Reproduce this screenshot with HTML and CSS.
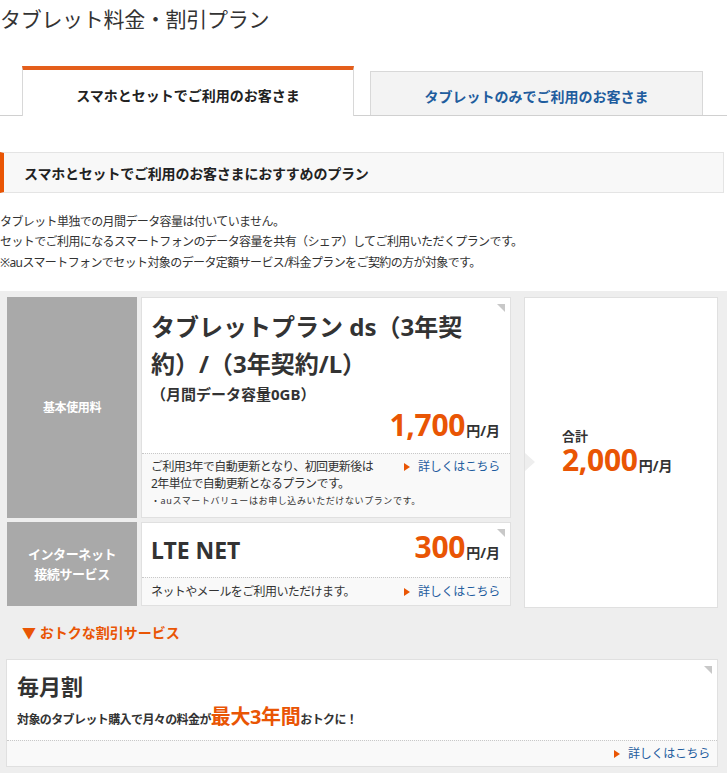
FILE: index.html
```html
<!DOCTYPE html>
<html lang="ja">
<head>
    <meta charset="UTF-8">
    <meta name="viewport" content="width=device-width, initial-scale=1.0">
    <title>タブレット料金・割引プラン</title>
    <link rel="stylesheet" href="styles.css">
</head>
<body>
    <h1 class="page-title">タブレット料金・割引プラン</h1>

    <div class="tabs">
        <div class="tab tab-active">スマホとセットでご利用のお客さま</div>
        <div class="tab">タブレットのみでご利用のお客さま</div>
    </div>

    <h2 class="section-head">スマホとセットでご利用のお客さまにおすすめのプラン</h2>

    <p class="lead">タブレット単独での月間データ容量は付いていません。<br>セットでご利用になるスマートフォンのデータ容量を共有（シェア）してご利用いただくプランです。</p>
    <p class="lead note-lead">※auスマートフォンでセット対象のデータ定額サービス/料金プランをご契約の方が対象です。</p>

    <div class="plan-area">
        <div class="plan-table">
            <div class="plans">
                <div class="plan-row row-basic">
                    <div class="plan-label">基本使用料</div>
                    <div class="plan-card">
                        <span class="corner"></span>
                        <div class="plan-body">
                            <div class="plan-name">タブレットプラン ds（3年契約）/（3年契約/L）</div>
                            <div class="plan-sub">（月間データ容量0GB）</div>
                            <div class="price"><span class="num">1,700</span><span class="unit">円/月</span></div>
                        </div>
                        <div class="plan-foot">
                            <div class="foot-row">
                                <div class="foot-desc">ご利用3年で自動更新となり、初回更新後は<br>2年単位で自動更新となるプランです。</div>
                                <a class="more" href="#">詳しくはこちら</a>
                            </div>
                            <div class="foot-note">・auスマートバリューはお申し込みいただけないプランです。</div>
                        </div>
                    </div>
                </div>
                <div class="plan-row row-net">
                    <div class="plan-label">インターネット<br>接続サービス</div>
                    <div class="plan-card">
                        <span class="corner"></span>
                        <div class="plan-body body-inline">
                            <div class="plan-name name-net">LTE NET</div>
                            <div class="price"><span class="num">300</span><span class="unit">円/月</span></div>
                        </div>
                        <div class="plan-foot">
                            <div class="foot-row">
                                <div class="foot-desc">ネットやメールをご利用いただけます。</div>
                                <a class="more" href="#">詳しくはこちら</a>
                            </div>
                        </div>
                    </div>
                </div>
            </div>
            <div class="total-card">
                <span class="total-arrow"></span>
                <div class="total-label">合計</div>
                <div class="price total-price"><span class="num">2,000</span><span class="unit">円/月</span></div>
            </div>
        </div>

        <div class="discount-head">▼ おトクな割引サービス</div>

        <div class="discount-card">
            <span class="corner"></span>
            <div class="discount-body">
                <div class="discount-name">毎月割</div>
                <div class="discount-text">対象のタブレット購入で月々の料金が<span class="strong">最大3年間</span>おトクに！</div>
            </div>
            <div class="discount-foot">
                <a class="more" href="#">詳しくはこちら</a>
            </div>
        </div>
    </div>
</body>
</html>
```

FILE: styles.css
```css
* {
    margin: 0;
    padding: 0;
    box-sizing: border-box;
}

body {
    font-family: "Noto Sans", "Noto Sans CJK JP", sans-serif;
    color: #333;
    background: #fff;
    width: 727px;
}

a {
    text-decoration: none;
}

.page-title {
    font-size: 21px;
    font-weight: normal;
    line-height: 38px;
    color: #333;
    letter-spacing: -0.3px;
}

.tabs {
    display: flex;
    align-items: flex-end;
    gap: 16px;
    padding-left: 22px;
    margin-top: 28px;
    border-bottom: 1px solid #d0d0d0;
}

.tab {
    width: 333px;
    height: 44px;
    display: flex;
    align-items: center;
    justify-content: center;
    font-size: 14px;
    font-weight: bold;
    color: #1f5d9e;
    background: #f3f3f3;
    border: 1px solid #d8d8d8;
    border-bottom: none;
    padding-top: 5px;
}

.tab-active {
    width: 332px;
    height: 50px;
    color: #222;
    background: #fff;
    border-top: 4px solid #e45e1b;
    margin-bottom: -1px;
    padding-top: 3px;
}

.section-head {
    margin-top: 36px;
    width: 724px;
    height: 41px;
    display: flex;
    align-items: center;
    padding-left: 20px;
    font-size: 14px;
    font-weight: bold;
    color: #222;
    letter-spacing: -0.2px;
    background: #f8f8f8;
    border: 1px solid #e4e4e4;
    border-left: 4px solid #e95504;
}

.lead {
    font-size: 12px;
    line-height: 20px;
    letter-spacing: -0.6px;
    color: #333;
}

.lead:first-of-type {
    margin-top: 19px;
}

.note-lead {
    margin-top: 1px;
}

.plan-area {
    margin-top: 18px;
    background: #eee;
    padding: 6px 9px 6px 6px;
}

.plan-table {
    display: flex;
    align-items: stretch;
}

.plans {
    display: flex;
    flex-direction: column;
    gap: 4px;
    padding-left: 1px;
}

.plan-row {
    display: flex;
    gap: 4px;
}

.plan-label {
    width: 130px;
    background: #a9a9a9;
    color: #fff;
    font-size: 13px;
    font-weight: bold;
    line-height: 20px;
    letter-spacing: -0.4px;
    display: flex;
    align-items: center;
    justify-content: center;
    text-align: center;
}

.row-basic .plan-label {
    font-size: 12px;
}

.plan-card {
    position: relative;
    width: 370px;
    background: #fff;
    border: 1px solid #e0e0e0;
    display: flex;
    flex-direction: column;
}

.row-basic .plan-card {
    height: 221px;
}

.row-net .plan-card {
    height: 84px;
}

.corner {
    position: absolute;
    top: 6px;
    right: 5px;
    width: 0;
    height: 0;
    border-top: 8px solid #c8c8c8;
    border-left: 8px solid transparent;
}

.plan-body {
    flex: 1;
    padding: 10px 10px 0 9px;
}

.plan-name {
    font-size: 24px;
    font-weight: bold;
    line-height: 37px;
    color: #333;
    max-width: 318px;
}

.plan-sub {
    font-size: 15px;
    font-weight: bold;
    line-height: 24px;
    color: #333;
}

.price {
    display: flex;
    justify-content: flex-end;
    align-items: baseline;
    color: #333;
    line-height: 30px;
}

.row-basic .price {
    margin-top: 4px;
}

.num {
    display: inline-block;
    font-size: 30px;
    font-weight: bold;
    line-height: 30px;
    color: #e95504;
    letter-spacing: -0.3px;
}

.unit {
    font-size: 14px;
    font-weight: bold;
    margin-left: 1px;
}

.body-inline {
    display: flex;
    justify-content: space-between;
    align-items: center;
    padding-top: 0;
}

.name-net {
    font-size: 23px;
    line-height: 34px;
    max-width: none;
}

.plan-foot {
    background: #f9f9f9;
    border-top: 1px dotted #c8c8c8;
    padding: 4px 10px 7px 9px;
}

.row-net .plan-foot {
    padding-top: 5px;
    padding-bottom: 5px;
}

.foot-row {
    display: flex;
    justify-content: space-between;
    align-items: flex-start;
}

.foot-desc {
    font-size: 12px;
    line-height: 17px;
    letter-spacing: -0.6px;
    color: #333;
}

.more {
    font-size: 12px;
    line-height: 17px;
    letter-spacing: -0.3px;
    color: #1f5d9e;
    white-space: nowrap;
}

.more::before {
    content: "";
    display: inline-block;
    width: 0;
    height: 0;
    border-left: 6px solid #e95504;
    border-top: 4px solid transparent;
    border-bottom: 4px solid transparent;
    margin-right: 8px;
    vertical-align: 0;
}

.foot-note {
    font-size: 9px;
    line-height: 18px;
    letter-spacing: 0.6px;
    color: #333;
}

.total-card {
    position: relative;
    flex: 1;
    margin-left: 13px;
    margin-bottom: -2px;
    background: #fff;
    border: 1px solid #e0e0e0;
    display: flex;
    flex-direction: column;
    justify-content: center;
    padding-left: 37px;
    padding-top: 4px;
}

.total-arrow {
    position: absolute;
    left: 0;
    top: 155px;
    width: 0;
    height: 0;
    border-left: 10px solid #eee;
    border-top: 9px solid transparent;
    border-bottom: 9px solid transparent;
}

.total-label {
    font-size: 13px;
    font-weight: bold;
    line-height: 16px;
    color: #333;
    margin-bottom: 1px;
}

.total-price {
    justify-content: flex-start;
}

.discount-head {
    padding: 17px 0 0 16px;
    height: 53px;
    font-size: 14px;
    font-weight: bold;
    line-height: 20px;
    color: #e95504;
}

.discount-card {
    position: relative;
    background: #fff;
    border: 1px solid #e0e0e0;
}

.discount-body {
    padding: 11px 10px 4px 10px;
}

.discount-name {
    font-size: 22px;
    font-weight: bold;
    line-height: 30px;
    color: #333;
}

.discount-text {
    font-size: 12px;
    font-weight: bold;
    line-height: 32px;
    letter-spacing: -0.6px;
    color: #333;
}

.strong {
    font-size: 20px;
    color: #e95504;
    letter-spacing: -0.4px;
}

.discount-foot {
    background: #f9f9f9;
    border-top: 1px dotted #c8c8c8;
    display: flex;
    justify-content: flex-end;
    padding: 4px 7px 4px 0;
}
```
